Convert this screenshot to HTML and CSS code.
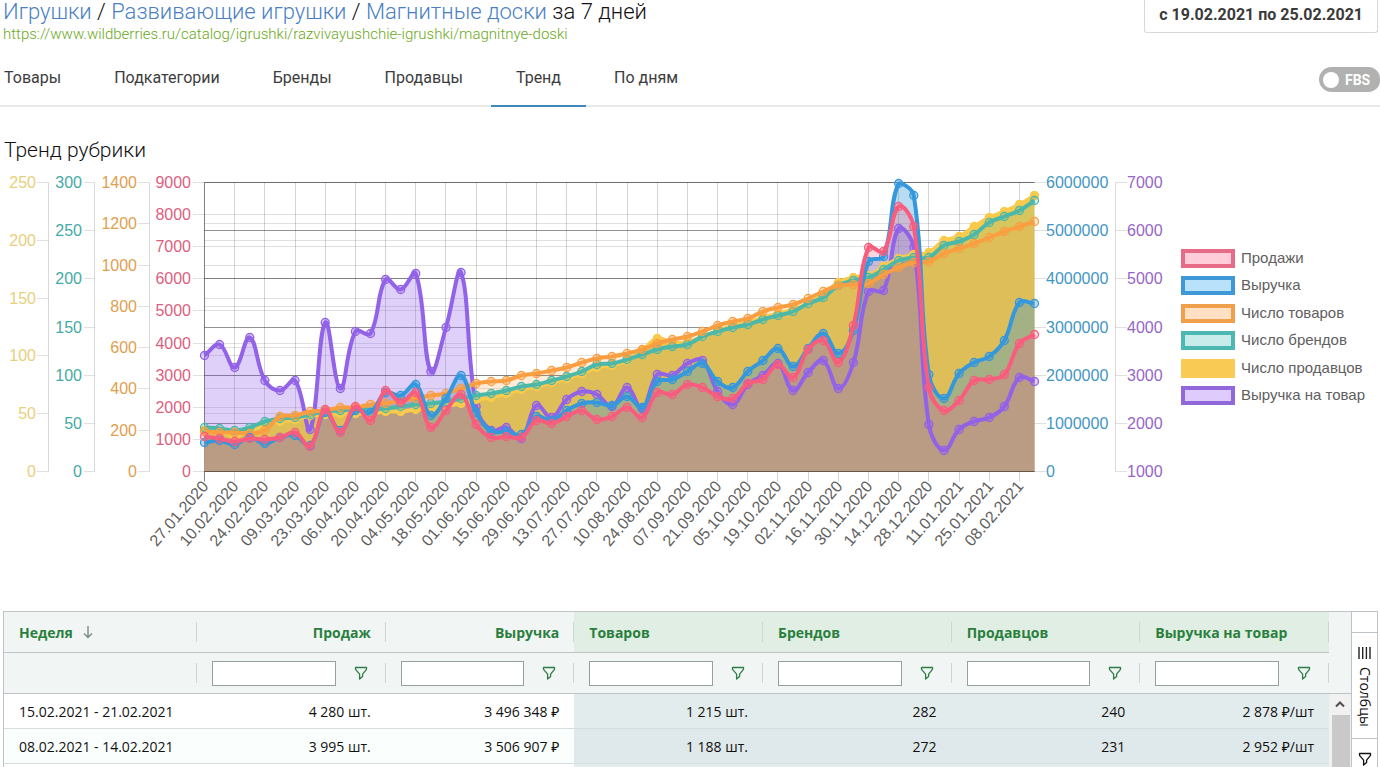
FILE: index.html
```
<!DOCTYPE html>
<html lang="ru">
<head>
<meta charset="utf-8">
<meta name="viewport" content="width=device-width, initial-scale=1">
<title>Магнитные доски</title>
<link rel="stylesheet" href="styles.css">
</head>
<body>
<svg class="sprite" aria-hidden="true">
  <symbol id="funnel" viewBox="0 0 14 14"><path d="M1.5 1.5h11v1.8L8.6 8.2v2.3L5.6 13V8.2L1.5 3.3z" fill="none" stroke="currentColor" stroke-width="1.3" stroke-linejoin="round"/></symbol>
</svg>
<header class="top">
  <div class="heading">
    <h1 class="crumbs"><a href="#">Игрушки</a> / <a href="#">Развивающие игрушки</a> / <a href="#">Магнитные доски</a> за 7 дней</h1>
    <a class="source" href="#">https://www.wildberries.ru/catalog/igrushki/razvivayushchie-igrushki/magnitnye-doski</a>
  </div>
  <button class="period" type="button">с 19.02.2021 по 25.02.2021</button>
</header>
<div class="tabbar">
  <nav class="tabs">
    <a class="tab" href="#">Товары</a>
    <a class="tab" href="#">Подкатегории</a>
    <a class="tab" href="#">Бренды</a>
    <a class="tab" href="#">Продавцы</a>
    <a class="tab active" href="#" aria-current="page">Тренд</a>
    <a class="tab" href="#">По дням</a>
  </nav>
  <label class="fbs"><input type="checkbox" role="switch"><span>FBS</span></label>
</div>
<h2 class="section">Тренд рубрики</h2>
<section class="trend">
  <svg class="chart" id="chart" viewBox="0 0 1170 390" role="img" aria-label="Тренд рубрики"></svg>
  <ul class="legend">
    <li class="pink"><i></i>Продажи</li>
    <li class="blue"><i></i>Выручка</li>
    <li class="orange"><i></i>Число товаров</li>
    <li class="teal"><i></i>Число брендов</li>
    <li class="yellow"><i></i>Число продавцов</li>
    <li class="purple"><i></i>Выручка на товар</li>
  </ul>
</section>
<section class="grid">
  <table class="weeks">
    <colgroup><col class="week"><col><col><col><col><col><col></colgroup>
    <thead>
      <tr class="titles">
        <th>Неделя <svg class="sort" viewBox="0 0 10 14" aria-hidden="true"><path d="M5 1v11M1 8.5l4 4 4-4" fill="none" stroke="currentColor" stroke-width="1.4"/></svg></th>
        <th class="num">Продаж</th><th class="num">Выручка</th>
        <th class="tint">Товаров</th><th class="tint">Брендов</th><th class="tint">Продавцов</th><th class="tint">Выручка на товар</th>
      </tr>
      <tr class="filters">
        <th></th>
        <th><div class="filter"><input type="text" aria-label="Продаж"><button type="button" aria-label="Фильтр"><svg><use href="#funnel"/></svg></button></div></th>
        <th><div class="filter"><input type="text" aria-label="Выручка"><button type="button" aria-label="Фильтр"><svg><use href="#funnel"/></svg></button></div></th>
        <th><div class="filter"><input type="text" aria-label="Товаров"><button type="button" aria-label="Фильтр"><svg><use href="#funnel"/></svg></button></div></th>
        <th><div class="filter"><input type="text" aria-label="Брендов"><button type="button" aria-label="Фильтр"><svg><use href="#funnel"/></svg></button></div></th>
        <th><div class="filter"><input type="text" aria-label="Продавцов"><button type="button" aria-label="Фильтр"><svg><use href="#funnel"/></svg></button></div></th>
        <th><div class="filter"><input type="text" aria-label="Выручка на товар"><button type="button" aria-label="Фильтр"><svg><use href="#funnel"/></svg></button></div></th>
      </tr>
    </thead>
    <tbody>
      <tr><td>15.02.2021 - 21.02.2021</td><td>4 280 шт.</td><td>3 496 348 ₽</td><td>1 215 шт.</td><td>282</td><td>240</td><td>2 878 ₽/шт</td></tr>
      <tr><td>08.02.2021 - 14.02.2021</td><td>3 995 шт.</td><td>3 506 907 ₽</td><td>1 188 шт.</td><td>272</td><td>231</td><td>2 952 ₽/шт</td></tr>
      <tr><td></td><td></td><td></td><td></td><td></td><td></td><td></td></tr>
    </tbody>
  </table>
  <div class="scroll">
    <div class="corner"></div>
    <button type="button" class="up" aria-label="Вверх"><svg viewBox="0 0 10 7"><path d="M1 5.5l4-4 4 4" fill="none" stroke="#505050" stroke-width="2"/></svg></button>
    <div class="thumb"></div>
  </div>
  <aside class="side">
    <button type="button" class="columns"><svg viewBox="0 0 13 12" aria-hidden="true"><path d="M1 0v12M4.7 0v12M8.4 0v12M12 0v12" stroke="#222" stroke-width="1.4"/></svg><span>Столбцы</span></button>
    <button type="button" class="side-filter" aria-label="Фильтры"><svg><use href="#funnel"/></svg></button>
  </aside>
</section>
<script src="chart.js"></script>
</body>
</html>
```
FILE: styles.css
```
* { box-sizing: border-box; }
body {
  margin: 0;
  height: 100vh;
  display: flex;
  flex-direction: column;
  overflow: hidden;
  background: #fff;
  color: #111;
  font-family: Roboto, "Liberation Sans", sans-serif;
}
button { font: inherit; border: 0; background: none; padding: 0; color: inherit; }
a { text-decoration: none; }
.sprite { display: none; }
.top { display: flex; justify-content: space-between; height: 46px; padding: 0 2px 0 3px; flex: none; }
.crumbs { margin: 0; font-size: 22px; line-height: 24px; font-weight: 300; color: #111; }
.crumbs a { color: #4a7fc4; }
.source { display: block; font-size: 15px; line-height: 20px; font-weight: 300; color: #6aa821; }
.period {
  height: 33px;
  padding: 0 14px 3px;
  border: 1px solid #d8d8d8;
  border-top: 0;
  border-radius: 0 0 3px 3px;
  font-size: 16px;
  font-weight: 700;
  color: #3a3a3a;
}
.tabbar { display: flex; justify-content: space-between; height: 61px; border-bottom: 2px solid #e9e9e9; flex: none; }
.tabs { display: flex; gap: 3px; height: 61px; }
.tab { padding: 20px 25px 0; font-size: 16px; line-height: 24px; color: #3d3d3d; border-bottom: 2px solid transparent; }
.tab:first-child { padding-left: 4px; }
.tab.active { border-bottom-color: #3f88b8; }
.fbs {
  display: flex;
  align-items: center;
  gap: 6px;
  align-self: flex-start;
  margin-top: 21px;
  width: 61px;
  height: 25px;
  padding-left: 4px;
  border-radius: 13px 12px 12px 13px;
  background: #b1b1b1;
  color: #fff;
  font-size: 14px;
  font-weight: 700;
}
.fbs input { appearance: none; width: 16px; height: 16px; margin: 0; border-radius: 50%; background: #fff; }
.section { margin: 29px 0 0 4px; font-size: 21px; line-height: 28px; font-weight: 300; color: #111; flex: none; }
.trend { display: flex; flex: none; padding-top: 1px; }
.chart { flex: 1; min-width: 0; display: block; }
.chart text { font-family: "Liberation Sans", Arial, sans-serif; font-size: 16px; }
.legend {
  flex: none;
  width: 210px;
  height: 156px;
  margin: 84px 0 0;
  padding: 0 0 0 11px;
  list-style: none;
  display: flex;
  flex-direction: column;
  justify-content: space-between;
  font: 15px/18px "Liberation Sans", Arial, sans-serif;
  color: #606060;
}
.legend li { display: flex; gap: 6px; white-space: nowrap; }
.legend i { width: 54px; height: 19px; border: 4px solid; }
.pink i { border-color: #e66b87; background: #ffcdd9; }
.blue i { border-color: #3f99d8; background: #b9e1fa; }
.orange i { border-color: #f09f4c; background: #ffe0c2; }
.teal i { border-color: #4db8b1; background: #c8ece9; }
.yellow i { border-color: #f9ca54; background: #f9ca54; }
.purple i { border-color: #9068dc; background: #e0ccfc; }
.grid {
  flex: 1;
  min-height: 156px;
  margin: 56px 2px 0 3px;
  display: flex;
  overflow: hidden;
  border: 1px solid #bdc3c7;
  border-bottom: 0;
  font-family: "Open Sans", "Noto Sans", sans-serif;
  font-size: 14px;
}
.weeks { flex: 1; width: 0; table-layout: fixed; border-collapse: separate; border-spacing: 0; }
.weeks col.week { width: 193px; }
.weeks th, .weeks td { padding: 0 15px; text-align: left; white-space: nowrap; }
.weeks th { position: relative; height: 41px; border-bottom: 1px solid #bdc3c7; background: #f1f6f4; color: #2a7f3e; font-weight: 700; }
.weeks th::after { content: ""; position: absolute; right: 0; top: 10px; width: 1px; height: 20px; background: #cfd5d3; }
.weeks th.num { text-align: right; }
.weeks th.tint { background: #e0eee3; }
.weeks td { height: 35px; border-bottom: 1px solid #d5dddf; text-align: right; font-weight: 400; }
.weeks td:first-child { text-align: left; }
.weeks tr:nth-child(even) td { background: #fafefd; }
.weeks td:nth-child(n+4) { background: #e3ecec; }
.weeks tr:nth-child(even) td:nth-child(n+4) { background: #dfe8ea; }
.sort { width: 10px; height: 14px; margin-left: 6px; vertical-align: -1px; color: #7c8a80; }
.filter { display: flex; align-items: center; gap: 18px; padding-right: 3px; }
.filter input { flex: 1; min-width: 0; height: 25px; border: 1px solid #95a0a0; background: #fff; padding: 0 4px; }
.filter button { display: flex; color: #2f7c46; }
.filter svg, .side-filter svg { width: 14px; height: 14px; }
.scroll { width: 22px; display: flex; flex-direction: column; background: #f1f1f1; }
.corner { height: 82px; flex: none; background: #f1f6f4; border-bottom: 1px solid #bdc3c7; }
.up { height: 21px; flex: none; display: grid; place-items: center; }
.up svg { width: 10px; height: 7px; }
.thumb { flex: 1; margin: 0 1px 0 3px; background: #c9c9c9; }
.side { width: 27px; padding-top: 20px; border-left: 1px solid #bdc3c7; border-right: 1px solid #bdc3c7; margin-right: -1px; }
.columns {
  width: 100%;
  height: 107px;
  display: flex;
  flex-direction: column;
  align-items: center;
  gap: 8px;
  padding-top: 14px;
  border: solid #bdc3c7;
  border-width: 1px 0;
}
.columns svg { width: 13px; height: 12px; flex: none; }
.columns span { writing-mode: vertical-rl; line-height: 20px; }
.side-filter { width: 100%; padding-top: 13px; display: flex; justify-content: center; }
```
FILE: chart.js
```
const TOP = 17.5, BOTTOM = 306.5, LEFT = 204.5, RIGHT = 1034.5, BASE = 165;
const svg = document.getElementById("chart");
let out = "";

const line = (x1, y1, x2, y2, o) =>
  `<line x1="${x1}" y1="${y1}" x2="${x2}" y2="${y2}" stroke="#000" stroke-opacity="${o}"/>`;
const snap = v => Math.floor(v) + 0.5;

// Value axes: text position, tick span, rule position, colour and scale
const axes = [
  { text: 36, anchor: "end", t1: 37, t2: 48.5, rule: 48.5, color: "#e9cf7c", from: 0, to: 250, step: 50 },
  { text: 82, anchor: "end", t1: 84, t2: 94.5, rule: 94.5, color: "#45aaa5", from: 0, to: 300, step: 50 },
  { text: 137, anchor: "end", t1: 138, t2: 149.5, rule: 149.5, color: "#dfa04e", from: 0, to: 1400, step: 200 },
  { text: 191, anchor: "end", t1: 193, t2: 204.5, color: "#dc5f80", from: 0, to: 9000, step: 1000 },
  { text: 1046, anchor: "start", t1: 1035, t2: 1046, color: "#3f96c4", from: 0, to: 6000000, step: 1000000 },
  { text: 1127, anchor: "start", t1: 1115.5, t2: 1127, rule: 1115.5, color: "#9566c8", from: 1000, to: 7000, step: 1000 }
];
for (const a of axes) {
  for (let v = a.from; v <= a.to; v += a.step) {
    const y = snap(BOTTOM - (v - a.from) / (a.to - a.from) * (BOTTOM - TOP));
    out += line(a.t1, y, a.t2, y, 0.12);
    const edge = v === a.from || v === a.to;
    out += line(LEFT, y, RIGHT, y, edge ? 0.13 : a.to === 6000000 ? 0.25 : 0.12);
    out += `<text x="${a.text}" y="${y + 5}" text-anchor="${a.anchor}" fill="${a.color}">${v}</text>`;
  }
  if (a.rule) out += line(a.rule, TOP, a.rule, BOTTOM, 0.15);
}

const STEP = (RIGHT - LEFT) / 55;
const first = Date.UTC(2020, 0, 27);
for (let i = 0; i < 56; i += 2) {
  const x = snap(LEFT + i * STEP);
  out += line(x, TOP, x, BOTTOM + 10, i ? 0.17 : 0.5);
  const label = new Date(first + i * 7 * 864e5).toISOString().slice(0, 10).split("-").reverse().join(".");
  out += `<text transform="translate(${x + 1} ${BOTTOM + 12}) rotate(-49)" text-anchor="end" y="5" fill="#5f5f5f">${label}</text>`;
}

const series = [
  { c: "250,92,126", f: 0.26, y: [436,438,441,438,439,437,432,446,409,432,406,420,390,402,392,427,410,394,424,437,436,437,420,423,416,410,419,416,407,417,392,394,384,387,396,398,383,379,364,377,349,340,362,325,247,251,206,226,387,410,400,380,379,374,343,334] },
  { c: "54,152,220", f: 0.34, y: [442,440,444,437,443,437,435,445,412,430,410,412,392,395,384,415,398,375,412,431,431,434,416,420,410,403,402,405,396,407,381,379,371,363,381,387,371,360,348,366,348,333,353,330,261,256,183,195,374,398,373,362,356,340,302,303] },
  { c: "250,158,66", f: 0.2, y: [431,432,432,433,430,416,415,411,410,407,407,404,403,400,398,395,393,388,383,381,380,375,373,370,367,362,358,356,353,349,343,339,336,331,325,321,318,311,307,304,298,291,285,284,283,274,267,262,261,253,248,243,237,231,226,221] },
  { c: "75,184,170", f: 0.2, y: [427,428,430,427,421,418,417,414,411,410,409,409,408,406,404,403,401,398,395,393,390,386,384,380,376,371,364,363,359,354,349,346,344,336,331,327,324,319,315,311,303,297,285,280,277,269,260,257,257,245,241,234,222,216,210,200] },
  { c: "250,202,76", f: 1, y: [430,431,435,430,424,421,419,415,414,413,413,413,411,411,409,408,405,403,399,397,393,389,386,382,378,373,367,365,360,350,338,342,342,336,331,325,322,317,313,309,303,294,282,277,275,266,258,254,252,240,236,226,217,211,204,195] },
  { c: "146,98,232", f: 0.3, y: [355,344,367,337,380,390,380,429,322,388,331,333,279,289,273,371,327,272,406,430,427,438,405,417,399,391,394,406,387,408,374,375,363,360,391,404,384,375,363,390,372,360,388,362,291,290,228,247,424,450,429,421,417,406,377,381] }
];

// Spline through the points with a tension of 0.4
function curve(p) {
  const clamp = y => Math.max(TOP, Math.min(BOTTOM, y));
  const ctl = p.map((b, i) => {
    const a = p[i - 1] || b, c = p[i + 1] || b;
    const d1 = Math.hypot(b[0] - a[0], b[1] - a[1]), d2 = Math.hypot(c[0] - b[0], c[1] - b[1]);
    const k1 = 0.4 * d1 / (d1 + d2), k2 = 0.4 * d2 / (d1 + d2);
    return [b[0] - k1 * (c[0] - a[0]), clamp(b[1] - k1 * (c[1] - a[1])),
            b[0] + k2 * (c[0] - a[0]), clamp(b[1] + k2 * (c[1] - a[1]))];
  });
  let d = `M${p[0]}`;
  for (let i = 1; i < p.length; i++)
    d += `C${ctl[i - 1][2]},${ctl[i - 1][3]} ${ctl[i][0]},${ctl[i][1]} ${p[i]}`;
  return d;
}
series.reverse();
for (const s of series) {
  s.points = s.y.map((y, i) => [LEFT + i * STEP, Math.max(TOP, y - BASE + 0.5)]);
  s.d = curve(s.points);
  out += `<path d="${s.d}L${RIGHT},${BOTTOM}L${LEFT},${BOTTOM}Z" fill="rgba(${s.c},${s.f})"/>`;
}
for (const s of series) {
  out += `<path d="${s.d}" fill="none" stroke="rgb(${s.c})" stroke-width="4"/>`;
  for (const [x, y] of s.points)
    out += `<circle cx="${x}" cy="${y}" r="4" fill="rgba(${s.c},${s.f})" stroke="rgb(${s.c})" stroke-width="1.3"/>`;
}
out += line(LEFT, BOTTOM, RIGHT, BOTTOM, 0.4);
svg.innerHTML = out;
```
